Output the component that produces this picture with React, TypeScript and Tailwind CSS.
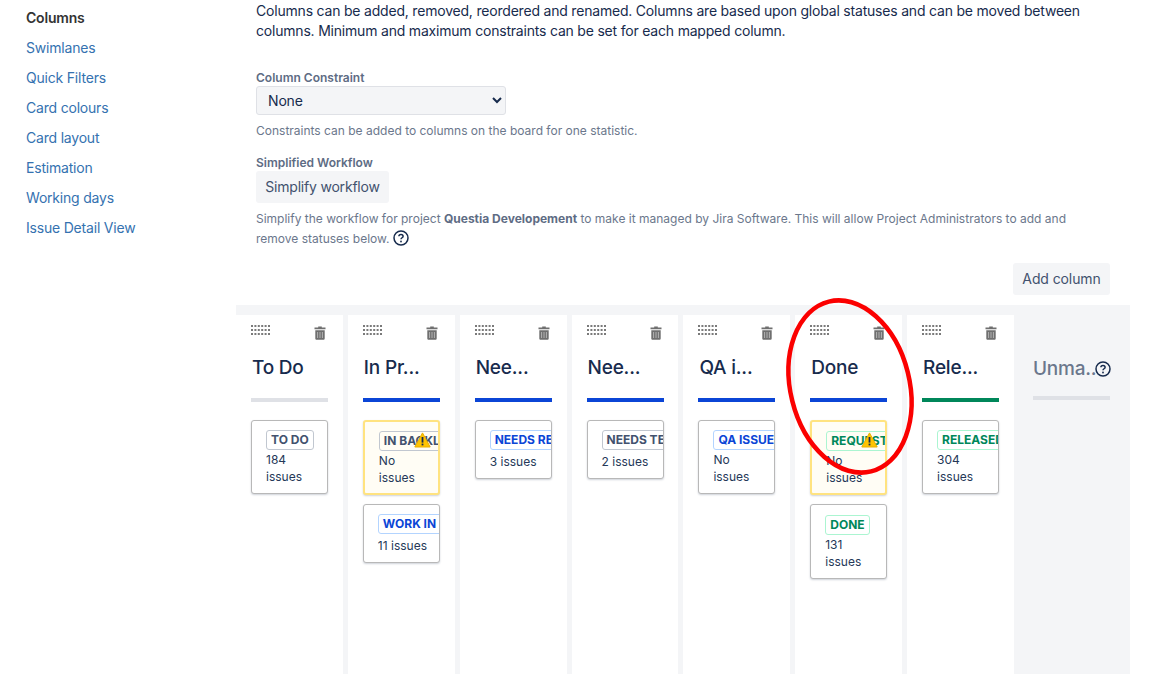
const navItems = ["Swimlanes", "Quick Filters", "Card colours", "Card layout", "Estimation", "Working days", "Issue Detail View"];

type Tone = "gray" | "blue" | "green";

type CardData = { status: string; tone: Tone; count: string; warn?: boolean; wrap?: boolean; lower?: boolean };

type ColumnData = { title: string; bar: string; cards: CardData[] };

const columns: ColumnData[] = [
  { title: "To Do", bar: "bg-[#dfe1e6]", cards: [{ status: "TO DO", tone: "gray", count: "184 issues", wrap: true }] },
  {
    title: "In Pr...",
    bar: "bg-[#0b45d6]",
    cards: [
      { status: "IN BACKLOG", tone: "gray", count: "No issues", warn: true, wrap: true },
      { status: "WORK IN PROGRESS", tone: "blue", count: "11 issues" },
    ],
  },
  { title: "Nee...", bar: "bg-[#0b45d6]", cards: [{ status: "NEEDS REVIEW", tone: "blue", count: "3 issues" }] },
  { title: "Nee...", bar: "bg-[#0b45d6]", cards: [{ status: "NEEDS TESTING", tone: "gray", count: "2 issues" }] },
  { title: "QA i...", bar: "bg-[#0b45d6]", cards: [{ status: "QA ISSUES", tone: "blue", count: "No issues", wrap: true }] },
  {
    title: "Done",
    bar: "bg-[#0b45d6]",
    cards: [
      { status: "REQUESTED", tone: "green", count: "No issues", warn: true, wrap: true },
      { status: "DONE", tone: "green", count: "131 issues", wrap: true, lower: true },
    ],
  },
  { title: "Rele...", bar: "bg-[#00875a]", cards: [{ status: "RELEASED", tone: "green", count: "304 issues", wrap: true }] },
];

const toneClasses: Record<Tone, string> = {
  gray: "border-[#c1c7d0] text-[#42526e]",
  blue: "border-[#b3d4ff] text-[#0b45d6]",
  green: "border-[#abf5d1] text-[#00875a]",
};

function Grip() {
  const dots = [];
  for (let row = 0; row < 3; row++) {
    for (let col = 0; col < 6; col++) {
      dots.push(<rect key={`${row}-${col}`} x={col * 3.4} y={row * 4} width="2" height="2" fill="#7a7a7a" />);
    }
  }
  return (
    <svg width="19" height="10" viewBox="0 0 19 10">
      {dots}
    </svg>
  );
}

function Trash() {
  return (
    <svg width="12" height="14" viewBox="0 0 12 14">
      <path d="M4.2 1.6V.6h3.6v1h3.7v1.7H.5V1.6z" fill="#6f6f6f" />
      <path d="M1.3 4.2h9.4v8.2c0 .8-.6 1.3-1.3 1.3H2.6c-.7 0-1.3-.5-1.3-1.3z" fill="#6f6f6f" />
      <path d="M3.6 6v6M6 6v6M8.4 6v6" stroke="#ffffff" strokeWidth="0.8" opacity="0.6" />
    </svg>
  );
}

function HelpIcon() {
  return (
    <svg width="16" height="16" viewBox="0 0 16 16" fill="none">
      <circle cx="8" cy="8" r="7" stroke="#172b4d" strokeWidth="1.5" />
      <path d="M5.9 6.3c0-1.2.9-1.9 2.1-1.9s2.1.7 2.1 1.8c0 1.6-2.1 1.5-2.1 3.1" stroke="#172b4d" strokeWidth="1.5" />
      <circle cx="8" cy="11.5" r="0.9" fill="#172b4d" />
    </svg>
  );
}

function Warning() {
  return (
    <svg className="absolute right-[7px] top-[10px]" width="17" height="16" viewBox="0 0 17 16">
      <path d="M8.5 .9 16.2 15H.8z" fill="#ffc400" stroke="#e8ae00" strokeWidth="1" strokeLinejoin="round" />
      <rect x="7.6" y="5" width="1.8" height="5.6" fill="#172b4d" />
      <rect x="7.6" y="11.6" width="1.8" height="1.8" fill="#172b4d" />
    </svg>
  );
}

function StatusCard({ card }: { card: CardData }) {
  let frame = "border border-[#b8b8b8] bg-white pb-[8px] pl-[14px]";
  if (card.warn) frame = "border-2 border-[#ffe380] bg-[#fffdf5] pb-[7px] pl-[14px] pt-[9px]";
  else if (card.lower) frame += " pt-[10px]";
  else frame += " pt-[9px]";
  return (
    <div className={`relative mb-[9px] w-[77px] overflow-hidden rounded-[3px] shadow-[0_1px_2px_rgba(9,30,66,0.2)] ${frame}`}>
      <div className={`h-[20px] w-max whitespace-nowrap rounded-[3px] border px-[4px] text-[12px] font-bold leading-[18px] ${toneClasses[card.tone]}`}>
        {card.status}
      </div>
      <div className={`text-[12px] leading-[17px] text-[#253858] ${card.wrap ? "mt-[1px] w-[50px]" : "mt-[3px] whitespace-nowrap"}`}>{card.count}</div>
      {card.warn && <Warning />}
    </div>
  );
}

function Column({ col }: { col: ColumnData }) {
  return (
    <div className="relative w-[106.85px] shrink-0 bg-white pl-[15px] pt-[10px]">
      <div className="flex h-[15px] w-[77px] items-start justify-between">
        <Grip />
        <div className="mr-[2px] mt-[1px]">
          <Trash />
        </div>
      </div>
      <div className="mt-[13px] h-[30px] pl-[1px] text-[19px] font-medium leading-[30px] tracking-[-0.2px] text-[#172b4d]">{col.title}</div>
      <div className={`mt-[15px] h-[4px] w-[77px] ${col.bar}`} />
      <div className="mt-[18px]">
        {col.cards.map((card) => (
          <StatusCard key={card.status} card={card} />
        ))}
      </div>
    </div>
  );
}

export default function App() {
  return (
    <div className="relative flex h-[674px] w-[1150px] overflow-hidden bg-white font-['Inter','Liberation_Sans',sans-serif]">
      {/* Sidebar */}
      <aside className="w-[236px] shrink-0 pl-[26px] pt-[2px] text-[14px] tracking-[-0.2px]">
        <div className="flex h-[30px] items-center font-semibold text-[#333333]">Columns</div>
        {navItems.map((item) => (
          <a key={item} className="flex h-[30px] items-center text-[#3572b0]">
            {item}
          </a>
        ))}
      </aside>

      {/* Main */}
      <main className="w-[894px] shrink-0">
        <div className="pl-[20px] pr-[20px]">
          <p className="mt-[1px] text-[14px] leading-[20px] tracking-[-0.2px] text-[#172b4d]">
            Columns can be added, removed, reordered and renamed. Columns are based upon global statuses and can be moved between columns. Minimum and maximum constraints can be set for each mapped column.
          </p>

          <div className="mt-[29px] text-[12px] font-semibold leading-[16px] text-[#5e6c84]">Column Constraint</div>
          <select className="block h-[29px] w-[250px] rounded-[3px] border border-[#dfe1e6] bg-[#f4f5f7] pl-[7px] text-[14px] tracking-[-0.17px] text-[#172b4d]">
            <option>None</option>
          </select>
          <p className="mt-[8px] text-[12px] leading-[16px] text-[#6b778c]">Constraints can be added to columns on the board for one statistic.</p>

          <div className="mt-[16px] text-[12px] font-semibold leading-[16px] text-[#5e6c84]">Simplified Workflow</div>
          <button className="block h-[32px] w-[133px] rounded-[3px] bg-[#f4f5f7] pb-[1px] text-[14px] tracking-[-0.2px] text-[#42526e]">Simplify workflow</button>
          <p className="mt-[6px] text-[12px] leading-[20px] text-[#6b778c]">
            Simplify the workflow for project <b className="font-bold text-[#5e6c84]">Questia Developement</b> to make it managed by Jira Software. This will allow Project Administrators to add and
            <br />
            remove statuses below.{" "}
            <span className="inline-block align-[-3px]">
              <HelpIcon />
            </span>
          </p>

          <div className="mt-[14px] flex justify-end">
            <button className="h-[32px] w-[97px] rounded-[3px] bg-[#f4f5f7] pb-[1px] text-[14px] tracking-[-0.1px] text-[#42526e]">Add column</button>
          </div>
        </div>

        {/* Board */}
        <div className="mt-[10px] flex h-[400px] gap-[5px] bg-[#f4f5f7] pt-[10px]">
          {columns.map((col, i) => (
            <Column key={i} col={col} />
          ))}
          <div className="-ml-[5px] pl-[19px] pt-[39px]">
            <div className="flex h-[30px] w-[78px] items-center justify-between">
              <span className="text-[19px] font-medium tracking-[-0.2px] text-[#6b778c]">Unma..</span>
              <span className="-ml-[4px]">
                <HelpIcon />
              </span>
            </div>
            <div className="mt-[12px] h-[4px] w-[77px] bg-[#dfe1e6]" />
          </div>
        </div>
      </main>

      {/* Red annotation */}
      <svg className="pointer-events-none absolute left-[780px] top-[290px]" width="145" height="195" viewBox="0 0 145 195" fill="none">
        <ellipse cx="70" cy="96.5" rx="59.5" ry="87.5" transform="rotate(-14 70 96.5)" stroke="#fb0000" strokeWidth="4.5" />
      </svg>
    </div>
  );
}
